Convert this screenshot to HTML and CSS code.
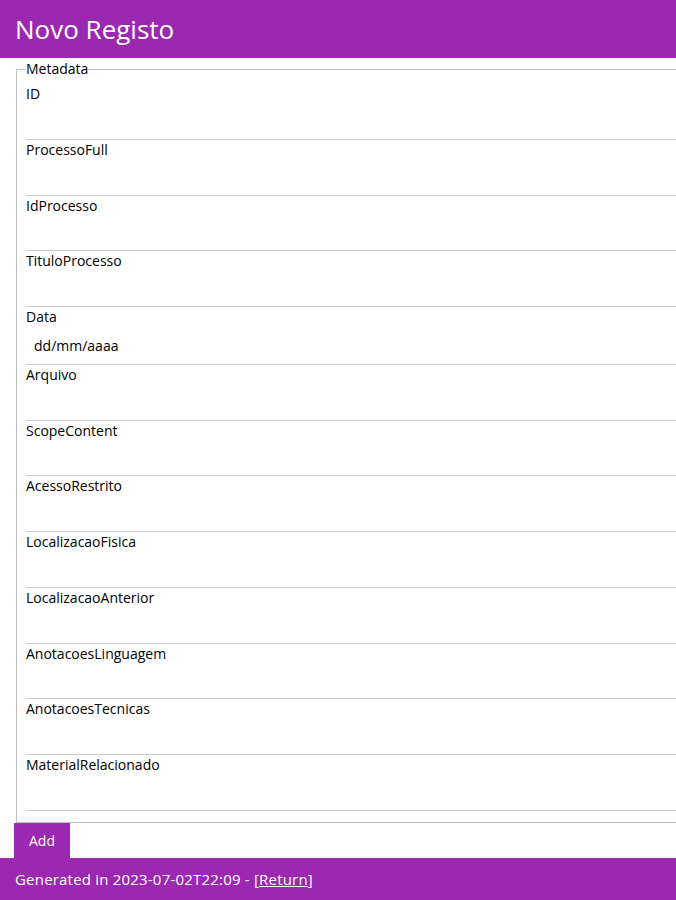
FILE: index.html
```html
<!DOCTYPE html>
<html lang="pt">
<head>
<meta charset="utf-8">
<title>Novo Registo</title>
<link rel="stylesheet" href="styles.css">
</head>
<body>
<header class="top-bar">
  <h1 class="top-title">Novo Registo</h1>
</header>
<main class="page">
  <form class="record-form">
    <fieldset class="meta-set">
      <legend class="meta-legend">Metadata</legend>
      <label class="field-label">ID</label>
      <input class="field-input" type="text">
      <label class="field-label">ProcessoFull</label>
      <input class="field-input" type="text">
      <label class="field-label">IdProcesso</label>
      <input class="field-input" type="text">
      <label class="field-label">TituloProcesso</label>
      <input class="field-input" type="text">
      <label class="field-label">Data</label>
      <input class="field-input field-date" type="text" placeholder="dd/mm/aaaa">
      <label class="field-label">Arquivo</label>
      <input class="field-input" type="text">
      <label class="field-label">ScopeContent</label>
      <input class="field-input" type="text">
      <label class="field-label">AcessoRestrito</label>
      <input class="field-input" type="text">
      <label class="field-label">LocalizacaoFisica</label>
      <input class="field-input" type="text">
      <label class="field-label">LocalizacaoAnterior</label>
      <input class="field-input" type="text">
      <label class="field-label">AnotacoesLinguagem</label>
      <input class="field-input" type="text">
      <label class="field-label">AnotacoesTecnicas</label>
      <input class="field-input" type="text">
      <label class="field-label">MaterialRelacionado</label>
      <input class="field-input" type="text">
    </fieldset>
    <button class="add-btn" type="button">Add</button>
  </form>
</main>
<footer class="bottom-bar">
  Generated in 2023-07-02T22:09 - [<a class="return-link" href="#">Return</a>]
</footer>
</body>
</html>
```

FILE: styles.css
```css
html, body {
  margin: 0;
  padding: 0;
  font-family: "Open Sans", "Noto Sans", sans-serif;
  font-size: 14px;
  color: #000;
  background: #fff;
}

.top-bar {
  background: #9c27b0;
  color: #fff;
  height: 58px;
  padding: 0 15px;
  display: flex;
  align-items: center;
  box-sizing: border-box;
}

.top-title {
  margin: 0;
  font-size: 26px;
  font-weight: 400;
  line-height: 1;
}

.page {
  overflow: hidden;
  padding: 1px 0 0 14px;
}

.record-form {
  margin: 0;
}

.meta-set {
  margin: 0 -40px 0 2px;
  padding: 5px 0 11px 9px;
  border: 1px solid #c0c0c0;
  border-right: none;
}

.meta-legend {
  padding: 0;
  font-size: 14px;
  line-height: 20px;
}

.field-label {
  display: block;
  line-height: 18.75px;
  padding-top: 1px;
}

.field-input {
  display: block;
  box-sizing: border-box;
  width: 100%;
  padding: 8px;
  border: none;
  border-bottom: 1px solid #ccc;
  font-family: inherit;
  font-size: 14px;
  line-height: 19px;
  margin: 0;
  outline: none;
}

.field-date {
  padding: 9px 8px;
}

.field-date::placeholder {
  color: #000;
  opacity: 1;
}

.add-btn {
  display: block;
  background: #9c27b0;
  color: #fff;
  border: none;
  font-family: inherit;
  font-size: 14px;
  padding: 8px 15px;
  height: 35px;
  margin: 0;
}

.bottom-bar {
  background: #9c27b0;
  color: #fff;
  padding: 11px 15px 14px;
  font-size: 15px;
  letter-spacing: 0.2px;
}

.return-link {
  color: #fff;
}
```
